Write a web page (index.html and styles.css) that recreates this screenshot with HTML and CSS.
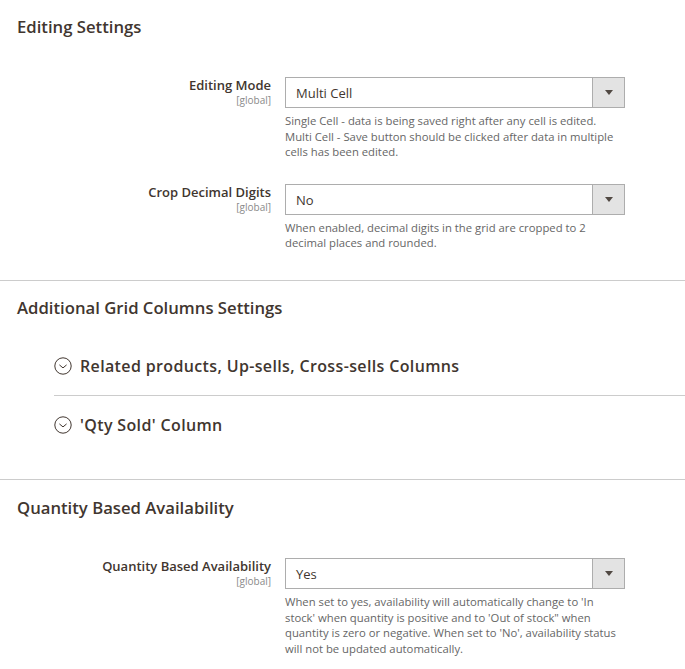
FILE: index.html
```html
<!DOCTYPE html>
<html lang="en">
<head>
<meta charset="utf-8">
<title>Settings</title>
<link rel="stylesheet" href="styles.css">
</head>
<body>
<section class="section first">
  <h2 class="section-title">Editing Settings</h2>
  <div class="fields">
    <div class="field">
      <div class="label"><span class="label-text">Editing Mode</span><span class="scope">[global]</span></div>
      <div class="control">
        <div class="select"><span class="select-value">Multi Cell</span><span class="select-action"><span class="arrow"></span></span></div>
        <p class="note">Single Cell - data is being saved right after any cell is edited.<br>Multi Cell - Save button should be clicked after data in multiple<br>cells has been edited.</p>
      </div>
    </div>
    <div class="field">
      <div class="label"><span class="label-text">Crop Decimal Digits</span><span class="scope">[global]</span></div>
      <div class="control">
        <div class="select"><span class="select-value">No</span><span class="select-action"><span class="arrow"></span></span></div>
        <p class="note">When enabled, decimal digits in the grid are cropped to 2 decimal places and rounded.</p>
      </div>
    </div>
  </div>
</section>
<section class="section second">
  <h2 class="section-title">Additional Grid Columns Settings</h2>
  <div class="collapsibles">
    <div class="collapsible">
      <svg class="chevron" viewBox="0 0 18 18" width="18" height="18" aria-hidden="true"><circle cx="9" cy="9" r="8.2" fill="none" stroke="#41362f" stroke-width="1"/><path d="M5.4 7.9 9 10.9 12.6 7.9" fill="none" stroke="#41362f" stroke-width="1"/></svg>
      <span class="collapsible-title">Related products, Up-sells, Cross-sells Columns</span>
    </div>
    <div class="collapsible bordered">
      <svg class="chevron" viewBox="0 0 18 18" width="18" height="18" aria-hidden="true"><circle cx="9" cy="9" r="8.2" fill="none" stroke="#41362f" stroke-width="1"/><path d="M5.4 7.9 9 10.9 12.6 7.9" fill="none" stroke="#41362f" stroke-width="1"/></svg>
      <span class="collapsible-title">'Qty Sold' Column</span>
    </div>
  </div>
</section>
<section class="section third">
  <h2 class="section-title">Quantity Based Availability</h2>
  <div class="fields">
    <div class="field">
      <div class="label"><span class="label-text">Quantity Based Availability</span><span class="scope">[global]</span></div>
      <div class="control">
        <div class="select"><span class="select-value">Yes</span><span class="select-action"><span class="arrow"></span></span></div>
        <p class="note">When set to yes, availability will automatically change to 'In stock' when quantity is positive and to 'Out of stock" when quantity is zero or negative. When set to 'No', availability status will not be updated automatically.</p>
      </div>
    </div>
  </div>
</section>
</body>
</html>
```
FILE: styles.css
```css
* { box-sizing: border-box; }
html, body { margin: 0; padding: 0; background: #fff; }
body {
  width: 685px;
  height: 669px;
  overflow: hidden;
  font-family: "Open Sans", sans-serif;
  color: #41362f;
}
.section { display: block; }
.section.first { padding-top: 15px; height: 280px; }
.section.second { border-top: 1px solid #ccc; height: 199px; padding-top: 15px; }
.section.third { border-top: 1px solid #ccc; padding-top: 16px; }
.section-title {
  margin: 0;
  font-size: 16.7px;
  line-height: 23px;
  font-weight: 600;
  padding-left: 17px;
  color: #41362f;
}
.fields { display: flex; flex-direction: column; gap: 24px; padding-top: 39px; }
.field { display: flex; gap: 14px; }
.label {
  width: 271px;
  display: flex;
  flex-direction: column;
  align-items: flex-end;
}
.label-text { font-size: 13px; line-height: 16px; font-weight: 600; }
.scope { font-size: 10px; line-height: 12px; color: #8a8a8a; margin-top: 1px; }
.control { width: 340px; }
.select {
  display: flex;
  height: 31px;
  border: 1px solid #adadad;
  background: #fff;
}
.select-value { flex: 1; font-size: 13px; line-height: 30px; padding-left: 10px; }
.select-action {
  width: 32px;
  background: #e3e3e3;
  border-left: 1px solid #adadad;
  display: flex;
  align-items: center;
  justify-content: center;
}
.arrow {
  width: 0;
  height: 0;
  border-left: 4.5px solid transparent;
  border-right: 4.5px solid transparent;
  border-top: 5px solid #514943;
}
.note {
  margin: 5px 0 0;
  font-size: 11.3px;
  line-height: 15.5px;
  color: #666;
}
.collapsibles { margin-left: 54px; padding-top: 18px; }
.collapsible {
  display: flex;
  align-items: center;
  gap: 8px;
  height: 58px;
}
.collapsible.bordered { border-top: 1px solid #ccc; }
.chevron { flex: none; }
.collapsible-title { font-size: 16px; font-weight: 600; letter-spacing: 0.36px; color: #41362f; }
```
